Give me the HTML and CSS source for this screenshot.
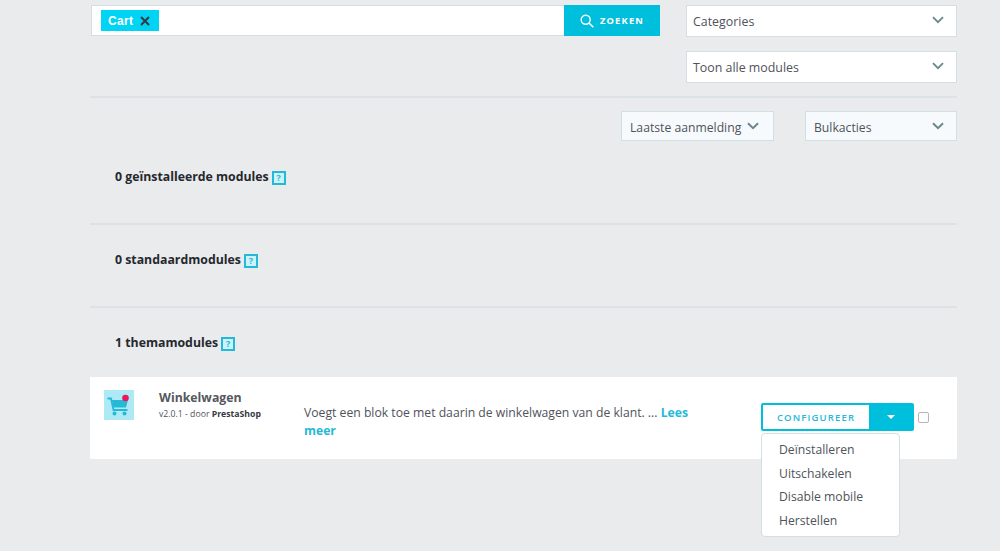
FILE: index.html
```html
<!DOCTYPE html>
<html lang="nl">
<head>
<meta charset="utf-8">
<title>Modules</title>
<link rel="stylesheet" href="styles.css">
</head>
<body>
<main class="page">
  <section class="filters">
    <div class="search">
      <div class="search-input">
        <span class="tag">Cart <svg class="tag-x" viewBox="0 0 10 10" width="10" height="10"><path d="M1 1l8 8M9 1l-8 8" stroke="#363a41" stroke-width="2" fill="none"/></svg></span>
      </div>
      <button class="search-btn"><svg viewBox="0 0 14 14" width="14" height="14"><circle cx="5.7" cy="5.7" r="4.5" fill="none" stroke="#fff" stroke-width="1.4"/><path d="M9 9l4.3 4.3" stroke="#fff" stroke-width="1.6" fill="none"/></svg><span>ZOEKEN</span></button>
    </div>
    <div class="selects">
      <div class="select"><span>Categories</span><svg class="chev" viewBox="0 0 12 8" width="12" height="8"><path d="M1 1.2l5 5 5-5" stroke="#6c868e" stroke-width="1.8" fill="none"/></svg></div>
      <div class="select"><span>Toon alle modules</span><svg class="chev" viewBox="0 0 12 8" width="12" height="8"><path d="M1 1.2l5 5 5-5" stroke="#6c868e" stroke-width="1.8" fill="none"/></svg></div>
    </div>
  </section>

  <section class="toolbar">
    <div class="action sort"><span>Laatste aanmelding</span><svg class="chev" viewBox="0 0 12 8" width="12" height="8"><path d="M1 1.2l5 5 5-5" stroke="#6c868e" stroke-width="2" fill="none"/></svg></div>
    <div class="action bulk"><span>Bulkacties</span><svg class="chev" viewBox="0 0 12 8" width="12" height="8"><path d="M1 1.2l5 5 5-5" stroke="#6c868e" stroke-width="2" fill="none"/></svg></div>
  </section>

  <section class="group first">
    <h2 class="group-title"><span>0 geïnstalleerde modules</span><span class="help">?</span></h2>
  </section>
  <section class="group second">
    <h2 class="group-title"><span>0 standaardmodules</span><span class="help">?</span></h2>
  </section>
  <section class="group third">
    <h2 class="group-title"><span>1 themamodules</span><span class="help">?</span></h2>
  </section>

  <article class="card">
    <div class="logo">
      <svg viewBox="0 0 30 30" width="30" height="30">
        <rect width="30" height="30" fill="#aeeaf5"/>
        <path d="M3.500 8.500h3.500l2.500 11.500h14" fill="none" stroke="#25b9d7" stroke-width="1.800"/>
        <path d="M8 10h16l-2 7.500h-12.500z" fill="#25b9d7"/>
        <circle cx="10.500" cy="23.500" r="2" fill="#25b9d7"/>
        <circle cx="20.500" cy="23.500" r="2" fill="#25b9d7"/>
        <circle cx="21.500" cy="8" r="3.300" fill="#f0145a"/>
      </svg>
    </div>
    <div class="meta">
      <h3 class="name">Winkelwagen</h3>
      <p class="ver">v2.0.1 - door <b>PrestaShop</b></p>
    </div>
    <p class="desc">Voegt een blok toe met daarin de winkelwagen van de klant. ... <a class="more">Lees meer</a></p>
    <div class="actions">
      <div class="split">
        <span class="split-main">CONFIGUREER</span>
        <span class="split-caret"><i class="caret"></i></span>
      </div>
      <span class="check"></span>
      <ul class="menu">
        <li>Deïnstalleren</li>
        <li>Uitschakelen</li>
        <li>Disable mobile</li>
        <li>Herstellen</li>
      </ul>
    </div>
  </article>
</main>
</body>
</html>
```
FILE: styles.css
```css
* { box-sizing: border-box; }
html, body { margin: 0; height: 551px; overflow: hidden; }
body { background: #e9ebed; font-family: "Open Sans", "Liberation Sans", sans-serif; color: #363a41; }
.page { width: 867px; margin-left: 90px; padding-top: 5px; }

.filters { display: flex; justify-content: space-between; padding-bottom: 13px; border-bottom: 2px solid #dfe2e4; }
.search { display: flex; width: 569px; height: 31px; margin-left: 1px; }
.search-input { flex: 1; display: flex; align-items: flex-start; background: #fff; border: 1px solid #d3e0e3; border-right: 0; padding: 4px 9px; }
.tag { display: inline-flex; align-items: center; height: 21px; padding: 0 9px 0 7px; background: #00d4f5; color: #fff; font: 700 12px "Liberation Sans", Arial, sans-serif; letter-spacing: .3px; white-space: pre; }
.tag-x { margin-left: 3px; }
.search-btn { width: 96px; background: #00bfdc; border: 0; color: #fff; font: 700 9.300px "Open Sans", sans-serif; letter-spacing: 1.200px; display: flex; align-items: center; justify-content: center; gap: 6px; padding: 0; }

.selects { width: 271px; display: flex; flex-direction: column; gap: 14px; }
.select { height: 32px; background: #fff; border: 1px solid #d3e0e3; display: flex; align-items: center; justify-content: space-between; padding: 0 12px 0 6px; font-size: 12.400px; color: #4f535b; }
.select .chev { margin-bottom: 3px; }

.toolbar { display: flex; justify-content: flex-end; gap: 31px; padding-top: 13px; }
.action { height: 30px; background: #f7fafc; border: 1px solid #d3e0e3; display: flex; align-items: center; padding-top: 2px; font-size: 12.200px; color: #4f535b; }
.action .chev { margin-bottom: 3px; }
.sort { width: 153px; padding-left: 8px; padding-right: 12px; gap: 6px; }
.bulk { width: 152px; padding-left: 8px; padding-right: 12px; justify-content: space-between; }

.group { padding-left: 25px; border-bottom: 2px solid #dfe2e4; }
.group.first { height: 84px; padding-top: 27px; }
.group.second { height: 83px; padding-top: 26px; }
.group.third { border-bottom: 0; height: 69px; padding-top: 26px; }
.group-title { margin: 0; font-size: 12.300px; font-weight: 700; line-height: 18px; color: #25282d; display: flex; align-items: center; gap: 3px; white-space: pre; }
.help { width: 14px; height: 14px; border: 2px solid #25b9d7; background: #cdf3fa; color: #25b9d7; font-size: 9px; line-height: 10px; text-align: center; display: inline-block; margin-top: 2px; }

.card { width: 867px; height: 82px; background: #fff; display: flex; position: relative; }
.logo { margin: 13px 0 0 14px; width: 30px; height: 30px; }
.logo svg { display: block; }
.meta { margin-left: 25px; width: 145px; padding-top: 12px; }
.name { margin: 0; font-size: 12.300px; font-weight: 700; line-height: 17px; color: #55585e; }
.ver { margin: 1px 0 0; font-size: 8.700px; line-height: 14px; color: #4f535b; }
.ver b { color: #363a41; }
.desc { margin: 27px 0 0; width: 400px; font-size: 12.200px; line-height: 18px; color: #4f535b; }
.more { color: #25b9d7; font-weight: 700; }
.actions { position: absolute; left: 671px; top: 26px; display: flex; align-items: center; }
.split { display: flex; width: 153px; height: 28px; border: 2px solid #00bfdc; border-radius: 2px; }
.split-main { width: 106px; background: #fff; color: #25b9d7; font-size: 9.500px; font-weight: 600; letter-spacing: 1.150px; display: flex; align-items: center; justify-content: center; }
.split-caret { flex: 1; background: #00bfdc; display: flex; align-items: center; justify-content: center; }
.caret { width: 0; height: 0; border-left: 4px solid transparent; border-right: 4px solid transparent; border-top: 4px solid #fff; }
.check { width: 11px; height: 11px; border: 1px solid #b3b7bb; border-radius: 2px; background: #fff; margin-left: 4px; }

.menu { position: absolute; left: 0; top: 30px; width: 139px; height: 104px; margin: 0; padding: 4px 0 0 17px; list-style: none; background: #fff; border: 1px solid #d3e0e3; border-radius: 4px; font-size: 12.200px; line-height: 23.500px; color: #4f535b; }
```
